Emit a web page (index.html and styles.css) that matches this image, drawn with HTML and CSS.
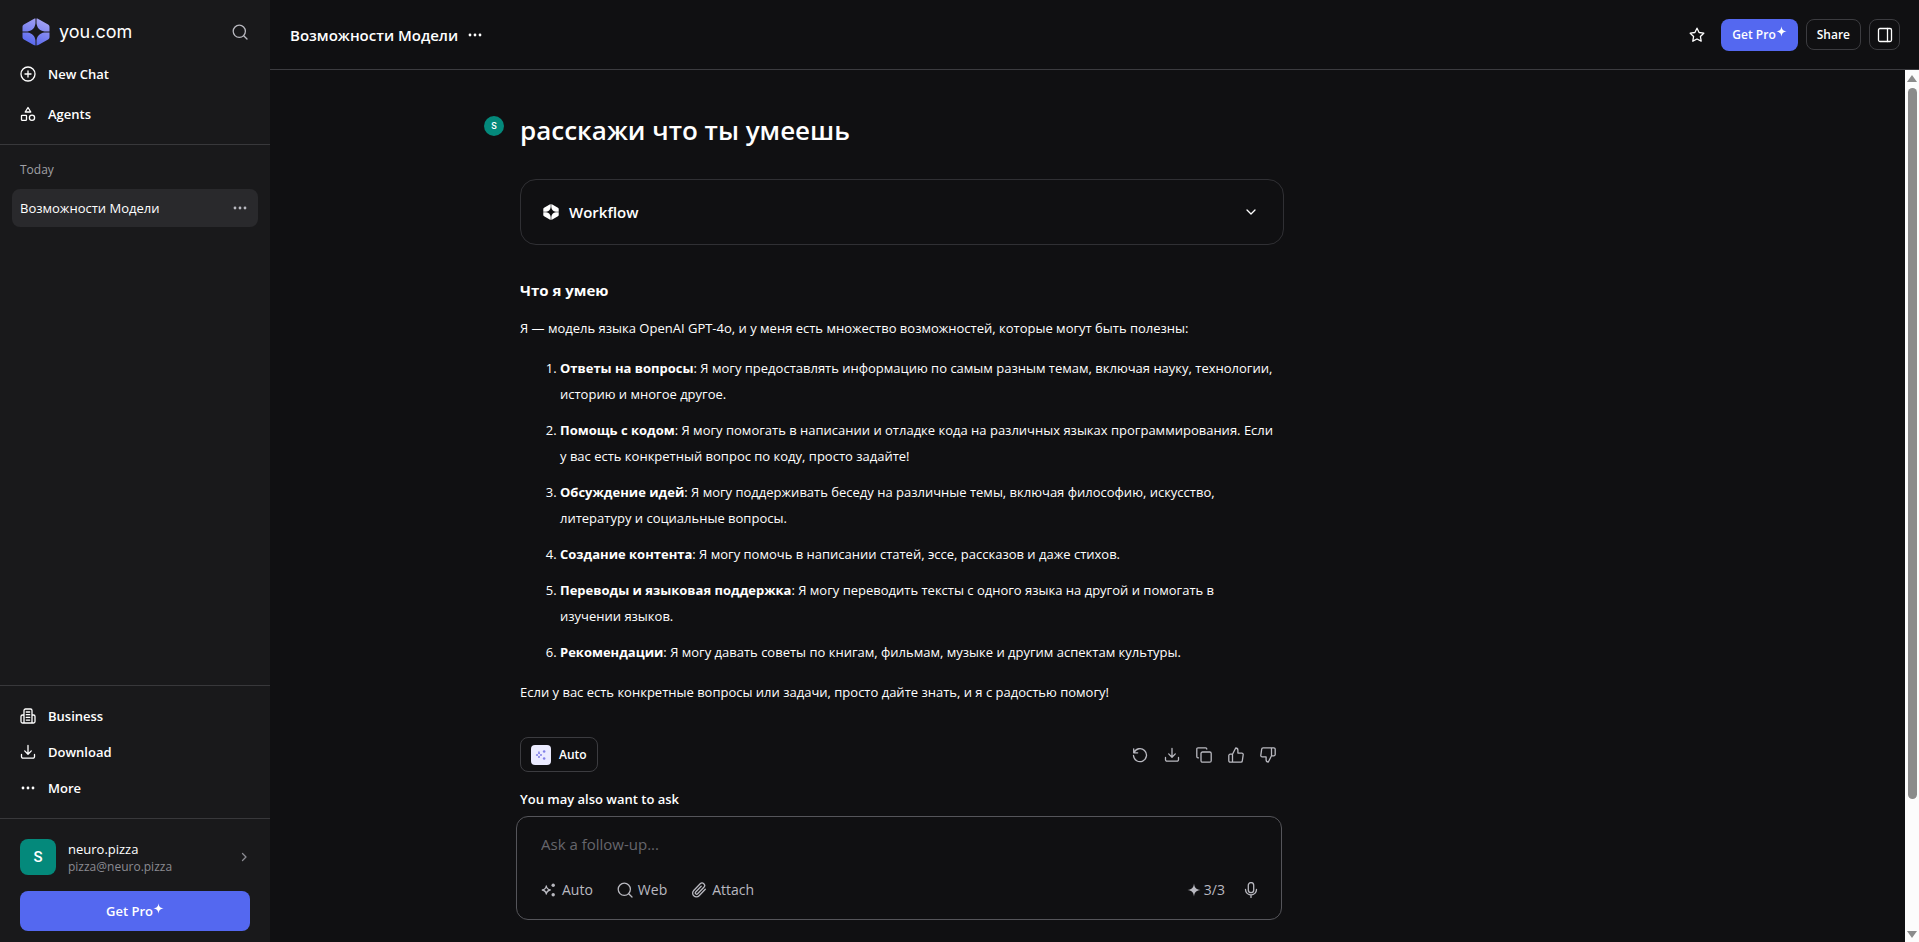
FILE: index.html
```html
<!DOCTYPE html>
<html lang="ru">
<head>
    <meta charset="UTF-8">
    <meta name="viewport" content="width=device-width, initial-scale=1.0">
    <title>Возможности Модели | you.com</title>
    <link rel="stylesheet" href="styles.css">
</head>
<body>
    <!-- shared icons -->
    <svg class="sprite" aria-hidden="true">
        <symbol id="i-search" viewBox="0 0 16 16"><circle cx="7.3" cy="7.3" r="6.1"/><path d="M11.7 11.7 15 15"/></symbol>
        <symbol id="i-dots" viewBox="0 0 16 16"><g fill="currentColor" stroke="none"><circle cx="3" cy="8" r="1.4"/><circle cx="8" cy="8" r="1.4"/><circle cx="13" cy="8" r="1.4"/></g></symbol>
        <symbol id="i-download" viewBox="0 0 16 16"><path d="M8 1.5v8.5M4.7 6.9 8 10.2l3.300-3.300M1.500 10.500v2.200a1.500 1.500 0 0 0 1.500 1.500h10a1.500 1.500 0 0 0 1.500-1.500v-2.200"/></symbol>
        <symbol id="i-star4" viewBox="0 0 16 16"><path fill="currentColor" stroke="none" d="M8 .5c.7 5 2 6.500 7.500 7.500-5.500 1-6.800 2.500-7.500 7.500-.7-5-2-6.500-7.500-7.500 5.500-1 6.800-2.500 7.500-7.500z"/></symbol>
        <symbol id="i-sparkles" viewBox="0 0 16 16"><path d="M5.300 4c.4 2.700 1.300 3.500 4 4-2.700.5-3.600 1.300-4 4-.4-2.700-1.300-3.500-4-4 2.700-.5 3.600-1.300 4-4z"/><g fill="currentColor" stroke="none"><circle cx="12.200" cy="3.300" r="1.700"/><circle cx="12.200" cy="12.700" r="1.700"/></g></symbol>
        <symbol id="i-thumb" viewBox="0 0 16 16"><path d="M4.500 7.200v8M4.500 7.200 7.700 1c1.300 0 2.200.9 2.200 2.200v2.900h3.900a1.400 1.400 0 0 1 1.400 1.600l-.9 6.200a1.400 1.400 0 0 1-1.400 1.300H2.200A1.400 1.400 0 0 1 .8 13.800V8.600a1.400 1.400 0 0 1 1.400-1.400z"/></symbol>
        <symbol id="i-hex" viewBox="0 0 28 28"><path stroke="none" fill-rule="evenodd" d="M14.500.5v4.800c.5 4.500 3 7.500 8 8.200h5V8.900c0-1.100-.5-1.900-1.400-2.400L16.300.9c-.6-.3-1.200-.4-1.800-.4zM13.500.5v4.800c-.5 4.500-3 7.500-8 8.200h-5V8.900c0-1.100.5-1.900 1.400-2.400L11.700.9c.6-.3 1.200-.4 1.800-.4zM14.500 27.500v-4.800c.5-4.500 3-7.500 8-8.200h5v4.600c0 1.100-.5 1.900-1.400 2.400l-9.800 5.600c-.6.300-1.200.4-1.800.4zM13.500 27.500v-4.800c-.5-4.500-3-7.500-8-8.200h-5v4.600c0 1.100.5 1.900 1.400 2.400l9.800 5.600c.6.300 1.200.4 1.800.4z"/></symbol>
    </svg>

    <div class="app">
        <aside class="sidebar">
            <div class="brand-row">
                <a class="brand" href="#">
                    <svg class="brand-mark" viewBox="0 0 28 28" aria-hidden="true">
                        <defs>
                            <linearGradient id="brand-fill" x1="0.7" y1="0" x2="0.3" y2="1">
                                <stop offset="0" stop-color="#a6a3f2"/>
                                <stop offset="1" stop-color="#5566ee"/>
                            </linearGradient>
                        </defs>
                        <use href="#i-hex" fill="url(#brand-fill)"/>
                    </svg>
                    <span>you.com</span>
                </a>
                <button class="icon-btn muted" aria-label="Search"><svg class="icon"><use href="#i-search"/></svg></button>
            </div>
            <nav class="nav nav-top">
                <a href="#"><svg class="icon" viewBox="0 0 16 16"><circle cx="8" cy="8" r="7"/><path d="M8 5v6M5 8h6"/></svg>New Chat</a>
                <a href="#"><svg class="icon" viewBox="0 0 16 16"><path d="M8 1.500 10.800 6H5.200z"/><rect x="1.500" y="9.300" width="5" height="5" rx=".5"/><circle cx="12" cy="11.800" r="2.600"/></svg>Agents</a>
            </nav>
            <div class="history">
                <p class="history-label">Today</p>
                <div class="history-item">
                    <a href="#">Возможности Модели</a>
                    <button class="icon-btn muted" aria-label="Chat options"><svg class="icon"><use href="#i-dots"/></svg></button>
                </div>
            </div>
            <nav class="nav nav-bottom">
                <a href="#"><svg class="icon" viewBox="0 0 16 16"><path d="M4 15V2.500A1.500 1.500 0 0 1 5.500 1h5A1.500 1.500 0 0 1 12 2.500V15M4 7H2.500A1.500 1.500 0 0 0 1 8.500v5A1.500 1.500 0 0 0 2.500 15h11a1.500 1.500 0 0 0 1.500-1.500v-5A1.500 1.500 0 0 0 13.500 7H12M6.300 4h3.400M6.300 6.700h3.400M6.300 9.400h3.400M6.300 12.100h3.400"/></svg>Business</a>
                <a href="#"><svg class="icon"><use href="#i-download"/></svg>Download</a>
                <a href="#"><svg class="icon"><use href="#i-dots"/></svg>More</a>
            </nav>
            <div class="account">
                <a class="profile" href="#">
                    <span class="avatar">S</span>
                    <span class="profile-text">
                        <span class="profile-name">neuro.pizza</span>
                        <span class="profile-mail">pizza@neuro.pizza</span>
                    </span>
                    <svg class="icon icon-small" viewBox="0 0 12 12"><path d="M4.500 2.500 8 6 4.500 9.500"/></svg>
                </a>
                <button class="btn btn-pro btn-wide">Get Pro<svg class="pro-star"><use href="#i-star4"/></svg></button>
            </div>
        </aside>

        <main class="main">
            <header class="topbar">
                <h2>Возможности Модели</h2>
                <button class="icon-btn" aria-label="Chat options"><svg class="icon"><use href="#i-dots"/></svg></button>
                <div class="topbar-actions">
                    <button class="icon-btn" aria-label="Favorite"><svg class="icon" viewBox="0 0 16 16"><path d="m8 1.200 2.100 4.300 4.700.7-3.400 3.300.8 4.700L8 12l-4.200 2.200.8-4.700L1.200 6.200l4.700-.7z"/></svg></button>
                    <button class="btn btn-pro">Get Pro<svg class="pro-star"><use href="#i-star4"/></svg></button>
                    <button class="btn btn-outline">Share</button>
                    <button class="btn btn-outline btn-square" aria-label="Toggle panel"><svg class="icon" viewBox="0 0 16 16"><rect x="1.500" y="1.500" width="13" height="13" rx="1.500"/><path d="M10.500 1.500v13"/></svg></button>
                </div>
            </header>

            <div class="content">
                <div class="chat">
                    <article class="thread">
                        <div class="question">
                            <span class="avatar avatar-round">S</span>
                            <h1>расскажи что ты умеешь</h1>
                        </div>
                        <button class="workflow">
                            <svg class="icon workflow-mark"><use href="#i-hex"/></svg>
                            <span>Workflow</span>
                            <svg class="icon icon-end" viewBox="0 0 16 16"><path d="M4 6l4 4 4-4"/></svg>
                        </button>
                        <div class="answer">
                            <h3>Что я умею</h3>
                            <p>Я — модель языка OpenAI GPT-4o, и у меня есть множество возможностей, которые могут быть полезны:</p>
                            <ol>
                                <li><strong>Ответы на вопросы</strong>: Я могу предоставлять информацию по самым разным темам, включая науку, технологии, историю и многое другое.</li>
                                <li><strong>Помощь с кодом</strong>: Я могу помогать в написании и отладке кода на различных языках программирования. Если у вас есть конкретный вопрос по коду, просто задайте!</li>
                                <li><strong>Обсуждение идей</strong>: Я могу поддерживать беседу на различные темы, включая философию, искусство, литературу и социальные вопросы.</li>
                                <li><strong>Создание контента</strong>: Я могу помочь в написании статей, эссе, рассказов и даже стихов.</li>
                                <li><strong>Переводы и языковая поддержка</strong>: Я могу переводить тексты с одного языка на другой и помогать в изучении языков.</li>
                                <li><strong>Рекомендации</strong>: Я могу давать советы по книгам, фильмам, музыке и другим аспектам культуры.</li>
                            </ol>
                            <p>Если у вас есть конкретные вопросы или задачи, просто дайте знать, и я с радостью помогу!</p>
                        </div>
                        <div class="answer-bar">
                            <button class="btn btn-outline btn-model"><span class="model-mark"><svg class="icon"><use href="#i-sparkles"/></svg></span>Auto</button>
                            <div class="answer-actions">
                                <button class="icon-btn muted" aria-label="Retry"><svg class="icon" viewBox="0 0 16 16"><path d="M1.700 1.800v4h4M2 5.600A6.500 6.500 0 1 1 1.500 8.500"/></svg></button>
                                <button class="icon-btn muted" aria-label="Download"><svg class="icon"><use href="#i-download"/></svg></button>
                                <button class="icon-btn muted" aria-label="Copy"><svg class="icon" viewBox="0 0 16 16"><rect x="5" y="5" width="10.200" height="10.200" rx="1.500"/><path d="M2.500 10.800H2A1.200 1.200 0 0 1 .8 9.600V2A1.200 1.200 0 0 1 2 .8h7.600A1.200 1.200 0 0 1 10.800 2"/></svg></button>
                                <button class="icon-btn muted" aria-label="Good answer"><svg class="icon"><use href="#i-thumb"/></svg></button>
                                <button class="icon-btn muted" aria-label="Bad answer"><svg class="icon icon-flip"><use href="#i-thumb"/></svg></button>
                            </div>
                        </div>
                        <h4>You may also want to ask</h4>
                    </article>

                    <form class="composer">
                        <input type="text" aria-label="Ask a follow-up" placeholder="Ask a follow-up...">
                        <div class="composer-tools">
                            <button type="button" class="tool"><svg class="icon"><use href="#i-sparkles"/></svg>Auto</button>
                            <button type="button" class="tool"><svg class="icon"><use href="#i-search"/></svg>Web</button>
                            <button type="button" class="tool"><svg class="icon" viewBox="0 0 16 16"><path d="m14.300 7.200-6.200 6.500a3.700 3.700 0 0 1-5.400-5.200l6.500-6.700a2.500 2.500 0 0 1 3.700 3.500l-6.300 6.500a1.300 1.300 0 0 1-1.900-1.800l5.500-5.700"/></svg>Attach</button>
                            <span class="quota"><svg class="icon"><use href="#i-star4"/></svg>3/3</span>
                            <button type="button" class="icon-btn muted" aria-label="Voice input"><svg class="icon" viewBox="0 0 16 16"><rect x="5.300" y=".6" width="5.400" height="10" rx="2.700"/><path d="M2.500 7.500a5.500 5.500 0 0 0 11 0M8 13v2.500"/></svg></button>
                        </div>
                    </form>
                </div>
                <div class="scrollbar" aria-hidden="true">
                    <span class="arrow arrow-up"></span>
                    <span class="track"><span class="thumb"></span></span>
                    <span class="arrow arrow-down"></span>
                </div>
            </div>
        </main>
    </div>
</body>
</html>
```
FILE: styles.css
```css
* { box-sizing: border-box; }
body { margin: 0; font-family: "Segoe UI", "Open Sans", "Noto Sans", sans-serif; font-size: 13px; line-height: 20px; color: #fff; background: #101012; }
a { color: inherit; text-decoration: none; }
h1, h2, h3, h4, p { margin: 0; }
button { font: inherit; color: inherit; cursor: pointer; }

/* icons */
.sprite { display: none; }
.icon { display: block; flex: none; width: 16px; height: 16px; fill: none; stroke: currentColor; stroke-width: 1.3; stroke-linecap: round; stroke-linejoin: round; }
.icon-small { width: 12px; height: 12px; margin-left: auto; stroke: #8b8b92; }
.icon-end { margin-left: auto; }
.icon-flip { transform: rotate(180deg); }
.icon-btn { display: flex; padding: 0; border: none; background: none; }
.muted { color: #b9b9c0; }

.app { display: flex; height: 100vh; }

/* sidebar */
.sidebar { display: flex; flex-direction: column; flex: none; width: 270px; background: #19191b; }
.brand-row { display: flex; align-items: center; justify-content: space-between; padding: 17px 22px 7px; }
.brand { display: flex; align-items: center; gap: 9px; font-family: Inter, sans-serif; font-size: 18px; line-height: 30px; }
.brand-mark { width: 28px; height: 28px; }
.nav { display: flex; flex-direction: column; font-weight: 600; }
.nav a { display: flex; align-items: center; gap: 12px; height: 40px; padding: 0 20px; }
.nav-top { padding-bottom: 10px; border-bottom: 1px solid #38383b; }
.nav-bottom { padding: 12px 0; border-top: 1px solid #38383b; }
.nav-bottom a { height: 36px; }
.history { flex: 1; padding: 15px 12px; }
.history-label { padding: 0 8px; margin-bottom: 9px; font-size: 12px; color: #a0a0a6; }
.history-item { display: flex; align-items: center; justify-content: space-between; height: 38px; padding: 0 10px 0 8px; border-radius: 8px; background: #29292c; }
.account { padding: 20px 20px 11px; border-top: 1px solid #38383b; }
.profile { display: flex; align-items: center; gap: 12px; margin-bottom: 16px; }
.profile-text { display: flex; flex-direction: column; }
.profile-name { line-height: 20px; }
.profile-mail { font-size: 12px; line-height: 16px; color: #8b8b92; }
.avatar { display: flex; align-items: center; justify-content: center; flex: none; width: 36px; height: 36px; border-radius: 8px; background: #04897b; font-family: Roboto, sans-serif; font-size: 15px; font-weight: 500; }
.avatar-round { width: 20px; height: 20px; border-radius: 50%; font-size: 9px; }

/* buttons */
.btn { display: flex; align-items: center; justify-content: center; border: 1px solid transparent; border-radius: 8px; font-size: 12px; font-weight: 600; }
.btn-pro { height: 32px; padding: 0 10px; background: #5468f0; }
.btn-wide { width: 100%; height: 40px; font-size: 13px; }
.btn-outline { height: 31px; padding: 0 10px; border-color: #3c3c40; background: none; }
.btn-square { width: 31px; padding: 0; }
.pro-star { width: 11px; height: 11px; margin-bottom: 6px; }

/* top bar */
.main { display: flex; flex-direction: column; flex: 1; min-width: 0; }
.topbar { display: flex; align-items: center; gap: 9px; height: 70px; padding: 0 19px 0 20px; border-bottom: 1px solid #3c3c40; }
.topbar h2 { font-size: 15px; font-weight: 600; }
.topbar-actions { display: flex; align-items: center; gap: 8px; margin-left: auto; }
.topbar-actions .icon-btn { margin-right: 8px; }

/* chat */
.content { display: flex; flex: 1; min-height: 0; }
.chat { display: grid; flex: 1; grid-template-columns: minmax(48px, 250px) minmax(0, 764px) 1fr; grid-template-rows: 1fr auto; min-width: 0; }
.thread { grid-column: 2; min-height: 0; padding-top: 40px; }
.question { display: flex; align-items: flex-start; gap: 16px; margin: 0 0 29px -36px; }
.question .avatar { margin-top: 6px; }
.question h1 { font-size: 26px; line-height: 40px; font-weight: 600; }
.workflow { display: flex; align-items: center; gap: 10px; width: 100%; height: 66px; padding: 0 24px 0 22px; border: 1px solid #303034; border-radius: 16px; background: none; font-size: 15px; font-weight: 600; }
.workflow-mark { fill: #fff; }
.answer { padding: 32px 7px 0 0; line-height: 26px; }
.answer h3 { margin-bottom: 12px; font-size: 15px; font-weight: 700; }
.answer ol { margin: 14px 0; padding-left: 40px; }
.answer li + li { margin-top: 10px; }
.answer-bar { display: flex; align-items: center; justify-content: space-between; margin: 32px 0 17px; padding-right: 8px; }
.answer-actions { display: flex; gap: 16px; }
.btn-model { gap: 8px; height: 35px; }
.model-mark { display: flex; align-items: center; justify-content: center; width: 20px; height: 20px; border-radius: 4px; background: #ebebff; color: #8280e8; }
.model-mark .icon { width: 12px; height: 12px; }
.thread h4 { font-size: 13px; font-weight: 600; }

/* follow-up box */
.composer { grid-column: 2; margin: 0 2px 22px -4px; padding: 15px 22px 19px 24px; border: 1px solid #55555a; border-radius: 12px; background: #101012; }
.composer input { display: block; width: 100%; height: 24px; padding: 0; border: none; outline: none; background: none; font: inherit; font-size: 15px; color: #fff; }
.composer input::placeholder { color: #66666c; }
.composer-tools { display: flex; align-items: center; gap: 24px; margin-top: 24px; font-size: 14px; color: #b9b9c0; }
.tool, .quota { display: flex; align-items: center; gap: 5px; padding: 0; border: none; background: none; }
.quota { gap: 3px; margin-left: auto; }
.quota .icon { width: 14px; height: 14px; }
.composer-tools .quota + .icon-btn { margin-left: -6px; }

/* scrollbar */
.scrollbar { display: flex; flex-direction: column; align-items: center; flex: none; width: 14px; padding: 5px 0 4px; background: #fcfcfc; }
.arrow { border: 5px solid transparent; }
.arrow-up { border-top-width: 0; border-bottom: 7px solid #8b8b8b; }
.arrow-down { border-bottom-width: 0; border-top: 7px solid #8b8b8b; }
.track { flex: 1; width: 9px; margin: 6px 0; }
.thumb { display: block; height: 85%; border-radius: 5px; background: #8b8b8b; }
```
